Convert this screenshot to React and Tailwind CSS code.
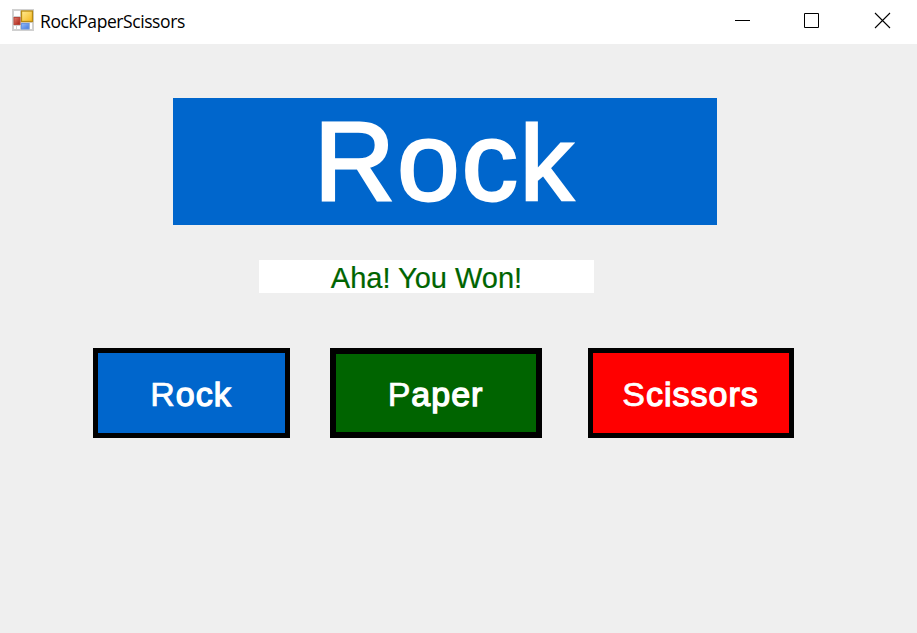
function AppIcon() {
  return (
    <svg width="22" height="22" viewBox="0 0 22 22" aria-hidden="true">
      <defs>
        <linearGradient id="gold" x1="0" y1="0" x2="1" y2="1">
          <stop offset="0" stopColor="#ffeb94" />
          <stop offset="1" stopColor="#f5b81c" />
        </linearGradient>
        <linearGradient id="ruby" x1="0" y1="0" x2="1" y2="1">
          <stop offset="0" stopColor="#e37c6c" />
          <stop offset="1" stopColor="#a81f14" />
        </linearGradient>
        <linearGradient id="sky" x1="0" y1="0" x2="1" y2="1">
          <stop offset="0" stopColor="#94bcfa" />
          <stop offset="1" stopColor="#4479df" />
        </linearGradient>
      </defs>
      <rect width="22" height="22" fill="#d0d0d0" />
      <path d="M2 2h6v5H2zM2 17h2v3H2zM5 17h3v3H5zM18 14h2v6h-2z" fill="#fff" />
      <rect x="9.5" y="2" width="11" height="10.5" fill="url(#gold)" stroke="#b88a12" strokeWidth="1.3" />
      <rect x="2" y="8.5" width="6" height="7" fill="url(#ruby)" stroke="#b8483c" />
      <rect x="9.5" y="14.5" width="7.5" height="5.5" fill="url(#sky)" stroke="#6b96e0" />
    </svg>
  );
}

function TitleBar() {
  return (
    <header className="flex h-11 items-start bg-white pl-3">
      <div className="pt-[9px]">
        <AppIcon />
      </div>
      <h1 className="ml-[6px] mt-[8px] whitespace-nowrap font-['Open_Sans',sans-serif] text-[17.5px] leading-[26px] tracking-[-0.42px] text-black">
        RockPaperScissors
      </h1>
      <div className="ml-auto flex pr-[26px] pt-3">
        <button aria-label="Minimize">
          <svg width="17" height="17" viewBox="0 0 17 17">
            <path d="M1 8.5h15" stroke="#000" />
          </svg>
        </button>
        <button aria-label="Maximize" className="ml-[52px]">
          <svg width="17" height="17" viewBox="0 0 17 17">
            <path d="M1.5 1.5h14v14h-14z" fill="none" stroke="#000" />
          </svg>
        </button>
        <button aria-label="Close" className="ml-[54px]">
          <svg width="17" height="17" viewBox="0 0 17 17">
            <path d="M1 1l15 15M16 1L1 16" stroke="#000" strokeWidth="1.1" />
          </svg>
        </button>
      </div>
    </header>
  );
}

// The capital is drawn lighter than the letters that follow it.
function ChoiceLabel({ initial, rest }) {
  return (
    <span>
      <span className="[-webkit-text-stroke:0.7px_white]">{initial}</span>
      <span className="[-webkit-text-stroke:1.3px_white]">{rest}</span>
    </span>
  );
}

const buttonBase =
  "flex h-[90px] items-center justify-center border-black pr-px pt-px font-['Liberation_Sans',Arial,sans-serif] text-[34px] leading-none tracking-[1px] text-white";

export default function App() {
  return (
    <div className="h-[633px] w-[917px] overflow-hidden bg-[#efefef]">
      <TitleBar />
      <main>
        <div className="ml-[173px] mt-[54px] flex h-[127px] w-[544px] items-center justify-center bg-[#0066cc] pr-[3px] font-['Liberation_Sans',Arial,sans-serif] text-[112px] leading-none text-white [-webkit-text-stroke:2.8px_white]">
          <span className="tracking-[2.3px]">
            Roc<span className="text-[106px] tracking-normal">k</span>
          </span>
        </div>
        <div className="ml-[259px] mt-[35px] flex h-[33px] w-[335px] items-center justify-center bg-white pt-1 font-['Liberation_Sans',Arial,sans-serif] text-[29px] leading-none text-[#006400] [-webkit-text-stroke:0.2px_#006400]">
          <span>Aha! You Won!</span>
        </div>
        <div className="ml-[93px] mt-[55px] flex">
          <button className={`${buttonBase} w-[197px] border-[5px] bg-[#0066cc]`}>
            <ChoiceLabel initial="R" rest="ock" />
          </button>
          <button className={`${buttonBase} ml-[40px] w-[212px] border-[6px] bg-[#006400]`}>
            <ChoiceLabel initial="P" rest="aper" />
          </button>
          <button className={`${buttonBase} ml-[46px] w-[206px] border-[5px] bg-[#ff0000]`}>
            <ChoiceLabel initial="S" rest="cissors" />
          </button>
        </div>
      </main>
    </div>
  );
}
